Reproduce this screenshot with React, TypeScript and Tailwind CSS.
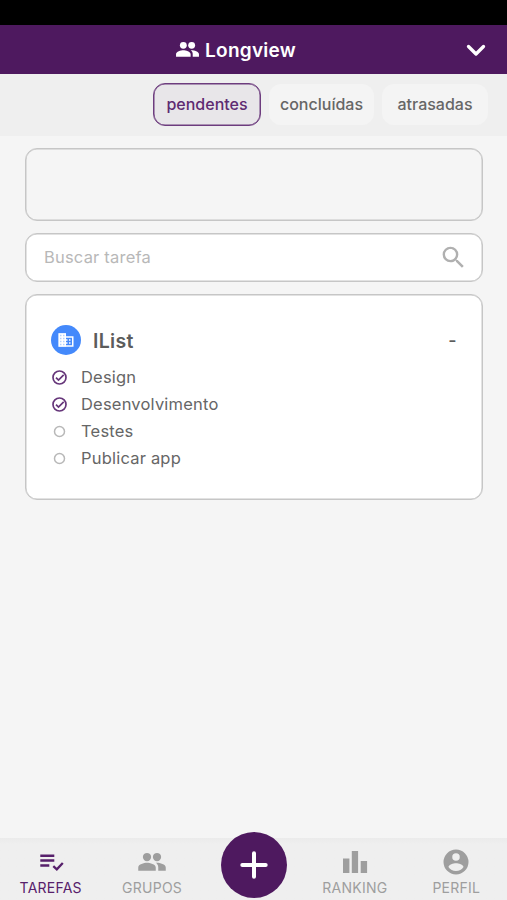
import React from "react";
import { MdSearch } from "react-icons/md";

const tasks = [
  { name: "Design", done: true },
  { name: "Desenvolvimento", done: true },
  { name: "Testes", done: false },
  { name: "Publicar app", done: false },
];

const PeopleIcon = ({ size }: { size: number }) => (
  <svg width={size} height={size} viewBox="0 0 24 24" fill="currentColor">
    <circle cx="8" cy="8" r="3.3" />
    <circle cx="16" cy="8" r="3.3" />
    <path d="M8 12.6c-2.33 0-7 1.17-7 3.7V19h14v-2.7c0-2.53-4.67-3.7-7-3.7zm8 0c-.29 0-.62.02-.97.05 1.16.84 1.97 1.97 1.97 3.65V19h6v-2.7c0-2.53-4.67-3.7-7-3.7z" />
  </svg>
);

const BuildingIcon = () => (
  <svg width="18" height="18" viewBox="0 0 24 24" fill="currentColor">
    <path d="M2 3h10v18H2z" opacity="0.6" />
    <path d="M12 7V3H2v18h20V7H12zM6 19H4v-2h2v2zm0-4H4v-2h2v2zm0-4H4V9h2v2zm0-4H4V5h2v2zm4 12H8v-2h2v2zm0-4H8v-2h2v2zm0-4H8V9h2v2zm0-4H8V5h2v2zm10 12h-8v-2h2v-2h-2v-2h2v-2h-2V9h8v10zm-2-8h-2v2h2v-2zm0 4h-2v2h2v-2z" />
  </svg>
);

const CheckIcon = ({ done }: { done: boolean }) => (
  <svg width="18" height="18" viewBox="0 0 18 18" fill="none">
    {done ? (
      <g stroke="#66367a" strokeWidth="1.7">
        <circle cx="8.5" cy="9.5" r="6.5" />
        <path d="M5 9.6l2.5 2.5 5.2-5.3" />
      </g>
    ) : (
      <circle cx="8.5" cy="9.5" r="5" stroke="#b8b8b8" strokeWidth="1.5" />
    )}
  </svg>
);

const TasksIcon = () => (
  <svg width="30" height="30" viewBox="0 0 30 30">
    <path
      d="M4.3 7.5h14v2.5h-14zM4.3 12.2h14v2.5h-14zM4.3 17.2h9v2.5h-9z"
      fill="currentColor"
    />
    <path
      d="M17.3 19.2l3.5 3.2 6-6.4"
      fill="none"
      stroke="currentColor"
      strokeWidth="2.3"
    />
  </svg>
);

const RankingIcon = () => (
  <svg width="30" height="30" viewBox="0 0 30 30" fill="currentColor">
    <path d="M3 11.5h6.4V26H3zM11.8 4h6.3v22h-6.3zM20.7 14h6.4v12h-6.4z" />
  </svg>
);

const ProfileIcon = () => (
  <svg width="30" height="30" viewBox="0 0 24 24" fill="currentColor">
    <path d="M12 2a10 10 0 1 0 0 20 10 10 0 0 0 0-20zm0 3a3 3 0 1 1 0 6 3 3 0 0 1 0-6zm0 14.2c-2.5 0-4.71-1.28-6-3.2.03-2 4-3.1 6-3.1s5.97 1.1 6 3.1c-1.29 1.92-3.5 3.2-6 3.2z" />
  </svg>
);

const NavItem = ({
  label,
  active,
  children,
}: {
  label: string;
  active?: boolean;
  children: React.ReactNode;
}) => (
  <button
    className={`flex flex-1 flex-col items-center pt-[9px] ${
      active ? "text-[#57206b]" : "text-[#9e9e9e]"
    }`}
  >
    {children}
    <span className="mt-px text-[14px] leading-5 tracking-[0.25px]">
      {label}
    </span>
  </button>
);

const App = () => {
  return (
    <div className="flex h-[900px] w-full flex-col overflow-hidden bg-[#f5f5f5] font-['Inter',sans-serif] text-[#5c5c5c]">
      <div className="h-[25px] shrink-0 bg-black" />
      <header className="grid h-[49px] shrink-0 grid-cols-[1fr_auto_1fr] items-center bg-[#4e195f] text-white">
        <span />
        <div className="mr-9 flex items-center gap-[5px]">
          <PeopleIcon size={25} />
          <h1 className="pt-[3px] text-[19px] font-semibold tracking-[0.25px]">
            Longview
          </h1>
        </div>
        <svg className="mr-5 justify-self-end" width="22" height="16" fill="none">
          <path
            d="M3.5 4.5l7.5 7.5 7.5-7.5"
            stroke="currentColor"
            strokeWidth="3.3"
            strokeLinecap="round"
            strokeLinejoin="round"
          />
        </svg>
      </header>

      <div className="flex h-[62px] shrink-0 items-center justify-end gap-2 bg-[#efefef] pr-[19px] pb-[2px] text-[16px] font-medium text-[#666]">
        <button className="h-[43px] w-[108px] rounded-xl border border-[#6d3c7e] bg-[#e8e6e9] text-[#5e2b72] shadow-[inset_0_0_0_0.5px_#6d3c7e]">
          pendentes
        </button>
        <button className="h-[41px] w-[105px] rounded-xl bg-[#f4f4f4]">
          concluídas
        </button>
        <button className="h-[41px] w-[106px] rounded-xl bg-[#f4f4f4]">
          atrasadas
        </button>
      </div>

      <main className="flex flex-1 flex-col pr-[24.5px] pl-[25px] pt-3">
        <div className="h-[73px] rounded-xl border border-[#c6c6c6] shadow-[inset_0_0_0_0.5px_#c6c6c6]" />

        <div className="mt-3 flex h-[49px] items-center justify-between rounded-xl border border-[#c6c6c6] bg-white pr-[14px] pl-[18px] shadow-[inset_0_0_0_0.5px_#c6c6c6]">
          <span className="text-[16.5px] tracking-[0.2px] text-[#b8b8b8]">
            Buscar tarefa
          </span>
          <MdSearch size={29} className="text-[#b0b0b0]" />
        </div>

        <section className="mt-3 h-[206px] rounded-xl border border-[#c6c6c6] bg-white pt-[30px] pr-[25px] pl-[25px] shadow-[inset_0_0_0_0.5px_#c6c6c6]">
          <div className="flex h-[30px] items-center">
            <span className="flex size-[30px] items-center justify-center rounded-full bg-[#4489fb] text-white">
              <BuildingIcon />
            </span>
            <h2 className="ml-3 pt-[3px] text-[19.5px] font-semibold tracking-[0.3px]">
              IList
            </h2>
            <span className="ml-auto text-[18px] font-medium">-</span>
          </div>
          <ul className="mt-[8px]">
            {tasks.map((task) => (
              <li key={task.name} className="flex h-[27px] items-center">
                <CheckIcon done={task.done} />
                <span className="ml-3 pt-[2px] text-[16.5px] tracking-[0.2px] text-[#666]">
                  {task.name}
                </span>
              </li>
            ))}
          </ul>
        </section>
      </main>

      <nav className="flex h-[62px] shrink-0 bg-linear-to-b from-[#ebebeb] to-[#efefef] to-10%">
        <NavItem label="TAREFAS" active>
          <TasksIcon />
        </NavItem>
        <NavItem label="GRUPOS">
          <PeopleIcon size={30} />
        </NavItem>
        <div className="flex flex-1 justify-center">
          <button className="-mt-[6.5px] flex size-[66px] shrink-0 items-center justify-center rounded-full bg-[#4e195f] text-white">
            <svg width="30" height="30" viewBox="0 0 30 30">
              <path
                d="M15 3.3v23.4M3.3 15h23.4"
                stroke="currentColor"
                strokeWidth="4"
                strokeLinecap="round"
              />
            </svg>
          </button>
        </div>
        <NavItem label="RANKING">
          <RankingIcon />
        </NavItem>
        <NavItem label="PERFIL">
          <ProfileIcon />
        </NavItem>
      </nav>
    </div>
  );
};

export default App;
